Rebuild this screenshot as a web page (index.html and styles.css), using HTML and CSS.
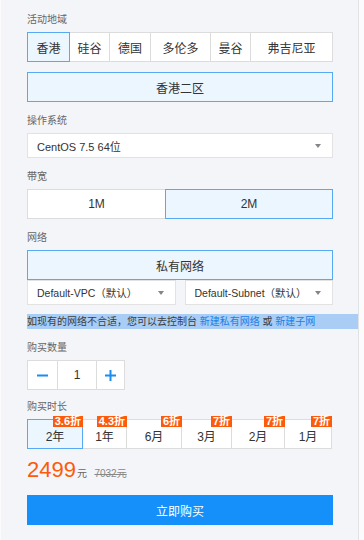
FILE: index.html
```html
<!DOCTYPE html>
<html lang="zh-CN">
<head>
<meta charset="utf-8">
<link rel="stylesheet" href="styles.css">
</head>
<body>
<div class="panel">
  <div class="section first">
    <div class="label">活动地域</div>
    <div class="tabs">
      <div class="opt active">香港</div>
      <div class="opt">硅谷</div>
      <div class="opt">德国</div>
      <div class="opt">多伦多</div>
      <div class="opt">曼谷</div>
      <div class="opt">弗吉尼亚</div>
    </div>
    <div class="opt active wide zone">香港二区</div>
  </div>

  <div class="section">
    <div class="label">操作系统</div>
    <div class="select os"><span>CentOS 7.5 64位</span><i class="caret"></i></div>
  </div>

  <div class="section">
    <div class="label">带宽</div>
    <div class="bands">
      <div class="opt latin">1M</div>
      <div class="opt latin active">2M</div>
    </div>
  </div>

  <div class="section">
    <div class="label">网络</div>
    <div class="opt active wide">私有网络</div>
    <div class="nets">
      <div class="select net"><span>Default-VPC（默认）</span><i class="caret"></i></div>
      <div class="select net"><span>Default-Subnet（默认）</span><i class="caret"></i></div>
    </div>
    <div class="hint">如现有的网络不合适，您可以去控制台 <a class="link">新建私有网络</a> 或 <a class="link">新建子网</a></div>
  </div>

  <div class="section">
    <div class="label">购买数量</div>
    <div class="counter">
      <div class="cbtn"><svg width="11" height="11" viewBox="0 0 11 11"><rect x="0" y="4.5" width="11" height="2" fill="#1a8cf2"/></svg></div>
      <div class="cval">1</div>
      <div class="cbtn"><svg width="11" height="11" viewBox="0 0 11 11"><rect x="0" y="4.5" width="11" height="2" fill="#1a8cf2"/><rect x="4.5" y="0" width="2" height="11" fill="#1a8cf2"/></svg></div>
    </div>
  </div>

  <div class="section dur-sec">
    <div class="label">购买时长</div>
    <div class="durs">
      <div class="opt dur active">2年<span class="badge">3.6折</span></div>
      <div class="opt dur">1年<span class="badge">4.3折</span></div>
      <div class="opt dur">6月<span class="badge">6折</span></div>
      <div class="opt dur">3月<span class="badge">7折</span></div>
      <div class="opt dur">2月<span class="badge">7折</span></div>
      <div class="opt dur">1月<span class="badge">7折</span></div>
    </div>
  </div>

  <div class="price">
    <span class="amount">2499</span><span class="unit">元</span>
    <span class="orig">7032元</span>
  </div>

  <div class="buy">立即购买</div>
</div>
</body>
</html>
```

FILE: styles.css
```css
* { box-sizing: border-box; }
html, body { margin: 0; padding: 0; }
body {
  background: #fbfbfc;
  font-family: "Liberation Sans", "Noto Sans CJK SC", sans-serif;
  color: #333;
}
.panel {
  width: 358px;
  height: 540px;
  margin-left: 1px;
  background: #f4f5f9;
  border-right: 1px solid #e1e2e6;
  padding: 13px 25px 0 26px;
}
.section { margin-top: 12px; }
.section.first { margin-top: 0; }
.section.dur-sec { margin-top: 10px; }
.label {
  font-size: 10px;
  line-height: 14px;
  height: 14px;
  color: #666;
  margin-bottom: 5px;
}
.opt {
  position: relative;
  height: 30px;
  border: 1px solid #dcdcdc;
  background: #fff;
  display: flex;
  align-items: center;
  justify-content: center;
  font-size: 12px;
  color: #333;
  white-space: nowrap;
}
.opt.latin { font-size: 12px; }
.opt.active {
  border-color: #58a9f4;
  background: #ebf6ff;
  z-index: 1;
}
.tabs {
  display: grid;
  grid-template-columns: 42px 40px 41px 60px 40px 1fr;
}
.tabs .opt, .bands .opt, .durs .opt { margin-right: -1px; }
.tabs .opt:last-child, .bands .opt:last-child, .durs .opt:last-child { margin-right: 0; }
.wide { width: 100%; }
.zone { margin-top: 10px; }
.select {
  height: 25px;
  background: #fff;
  border: 1px solid #e2e2e2;
  display: flex;
  align-items: center;
  justify-content: space-between;
  padding: 0 9px 0 9px;
  font-size: 11px;
  color: #333;
}
.select.net { font-size: 10.5px; }
.caret {
  width: 0; height: 0;
  border-left: 3.5px solid transparent;
  border-right: 3.5px solid transparent;
  border-top: 4px solid #858585;
  margin-right: 2px;
}
.bands {
  display: grid;
  grid-template-columns: 138px 1fr;
}
.nets {
  display: grid;
  grid-template-columns: 1fr 1fr;
  column-gap: 9px;
}
.hint {
  margin-top: 9px;
  margin-right: -25px;
  height: 15px;
  line-height: 15px;
  font-size: 10px;
  background: #a9cdf4;
  color: #3c3c3c;
  white-space: nowrap;
}
.link { color: #1a7fe6; }
.counter {
  display: grid;
  grid-template-columns: 30px 39px 29px;
  width: 98px;
}
.cbtn, .cval {
  height: 30px;
  background: #fff;
  border: 1px solid #dcdcdc;
  display: flex;
  align-items: center;
  justify-content: center;
  margin-right: -1px;
}
.cbtn:last-child { margin-right: 0; }
.cval { font-size: 12px; color: #333; }
.durs {
  display: grid;
  grid-template-columns: 55px 44px 55px 50px 53px 48px;
}
.dur { font-size: 12px; padding-top: 2px; }
.badge {
  position: absolute;
  top: -4px;
  right: -1px;
  height: 11px;
  line-height: 11px;
  padding: 0 2px;
  background: #fd5a0b;
  color: #fff;
  font-size: 11px;
  font-weight: bold;
  z-index: 2;
}
.price {
  margin-top: 9px;
  height: 24px;
  line-height: 24px;
  white-space: nowrap;
}
.amount {
  font-size: 22px;
  color: #fd5a0b;
}
.unit {
  font-size: 10px;
  color: #666;
  margin-left: 1px;
}
.orig {
  font-size: 10px;
  color: #888;
  text-decoration: line-through;
  margin-left: 3px;
}
.buy {
  margin-top: 13px;
  height: 30px;
  background: #158ffa;
  color: #fff;
  font-size: 12px;
  display: flex;
  align-items: center;
  justify-content: center;
}
```
